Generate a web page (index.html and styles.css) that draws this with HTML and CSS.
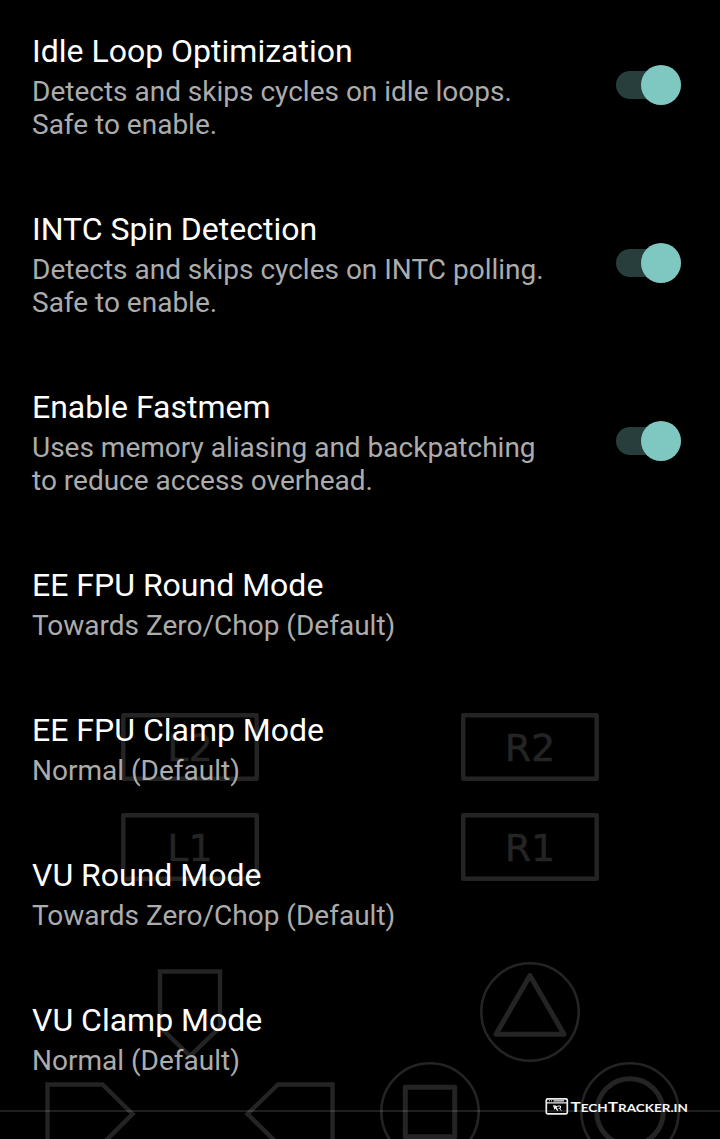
FILE: index.html
```html
<!DOCTYPE html>
<html lang="en">
<head>
<meta charset="utf-8">
<title>Settings</title>
<link rel="stylesheet" href="styles.css">
</head>
<body>
<main class="screen">
  <svg class="gamepad" viewBox="0 0 720 1139" aria-hidden="true">
    <g class="shoulder">
      <rect x="123.3" y="715.2" width="133.4" height="63.6"/>
      <rect x="123.3" y="815.2" width="133.4" height="63.6"/>
      <rect x="463.3" y="715.2" width="133.4" height="63.6"/>
      <rect x="463.3" y="815.2" width="133.4" height="63.6"/>
    </g>
    <g class="arrows">
      <path d="M160 971.5H220V1027L190 1056L160 1027Z"/>
      <path d="M47.5 1084.5H102.500L132.500 1114L102.500 1144H47.500Z"/>
      <path d="M332.500 1084.500H278L247.500 1114L278 1144H332.500Z"/>
    </g>
    <g class="labels">
      <text x="190" y="761">L2</text>
      <text x="190" y="861">L1</text>
      <text x="530" y="761">R2</text>
      <text x="530" y="861">R1</text>
    </g>
    <g class="rings">
      <circle cx="530" cy="1012" r="48.700"/>
      <circle cx="430" cy="1112" r="48.700"/>
      <circle cx="630" cy="1112" r="48.700"/>
    </g>
    <g class="symbols">
      <path d="M530 975.500L564 1034.300H496Z"/>
      <rect x="405.300" y="1087.300" width="49.400" height="49.400"/>
      <circle cx="630" cy="1112" r="33.300"/>
    </g>
  </svg>
  <section class="list">
    <label class="row">
      <span class="copy"><span class="title">Idle Loop Optimization</span><span class="summary">Detects and skips cycles on idle loops.<br>Safe to enable.</span></span>
      <span class="switch"><span class="thumb"></span></span>
    </label>
    <label class="row">
      <span class="copy"><span class="title">INTC Spin Detection</span><span class="summary">Detects and skips cycles on INTC polling.<br>Safe to enable.</span></span>
      <span class="switch"><span class="thumb"></span></span>
    </label>
    <label class="row">
      <span class="copy"><span class="title">Enable Fastmem</span><span class="summary">Uses memory aliasing and backpatching<br>to reduce access overhead.</span></span>
      <span class="switch"><span class="thumb"></span></span>
    </label>
    <div class="row"><span class="copy"><span class="title">EE FPU Round Mode</span><span class="summary">Towards Zero/Chop (Default)</span></span></div>
    <div class="row"><span class="copy"><span class="title">EE FPU Clamp Mode</span><span class="summary">Normal (Default)</span></span></div>
    <div class="row"><span class="copy"><span class="title">VU Round Mode</span><span class="summary">Towards Zero/Chop (Default)</span></span></div>
    <div class="row"><span class="copy"><span class="title">VU Clamp Mode</span><span class="summary">Normal (Default)</span></span></div>
    <div class="divider"></div>
  </section>
  <svg class="watermark" viewBox="0 0 146 22" role="img" aria-label="TechTracker.in">
    <rect class="frame" x="1.300" y="2.900" width="21" height="15" rx="1.300"/>
    <path class="bar" d="M1.500 6.800H22M8.500 4.800H19"/>
    <path class="dots" d="M4 4.800H7.500"/>
    <path class="cursor" d="M8 9L13 10.200L11.700 11.500L13.400 14.200L12.200 15L10.500 12.500L9.300 13.700Z"/>
    <path class="mark" d="M12.500 10H15.500V12.200H13.500M14.400 12.200L16.300 14.700"/>
    <text class="brand" x="25.500" y="16" textLength="117.500" lengthAdjust="spacingAndGlyphs"><tspan class="cap">T</tspan>ECH<tspan class="cap">T</tspan>RACKER.IN</text>
  </svg>
</main>
</body>
</html>
```
FILE: styles.css
```css
body {
  margin: 0;
  background: #000;
  font-family: Roboto, sans-serif;
}
.screen {
  position: relative;
  height: 1139px;
  overflow: hidden;
}
.gamepad {
  position: absolute;
  inset: 0;
  width: 720px;
  height: 1139px;
  fill: none;
  stroke: #242424;
}
.shoulder { stroke-width: 4.4; stroke-linejoin: round; }
.arrows { stroke-width: 4.4; stroke-linejoin: miter; }
.labels {
  fill: #242424;
  stroke: #242424;
  stroke-width: 0.5;
  font: 38px "DejaVu Sans", sans-serif;
  text-anchor: middle;
}
.rings { stroke-width: 2.6; }
.symbols { stroke-width: 5; stroke-linejoin: round; }
.list { position: relative; }
.row {
  display: flex;
  justify-content: space-between;
  padding: 32px 39px 37px 32px;
}
.copy {
  display: flex;
  flex-direction: column;
  gap: 5px;
}
.title {
  color: #fff;
  font-size: 32px;
  line-height: 38px;
}
.summary {
  color: #acacac;
  font-size: 28px;
  line-height: 33px;
}
.switch {
  display: flex;
  justify-content: flex-end;
  align-items: center;
  align-self: flex-start;
  width: 65px;
  height: 28px;
  margin-top: 39px;
  border-radius: 14px;
  background: #283e3c;
}
.thumb {
  flex: none;
  width: 40px;
  height: 40px;
  border-radius: 50%;
  background: #7ec8c1;
}
.divider {
  height: 2px;
  margin-top: -4px;
  background: rgba(255, 255, 255, 0.12);
}
.watermark {
  position: absolute;
  left: 545px;
  top: 1096px;
  width: 146px;
  height: 22px;
  fill: none;
  stroke: #eee;
}
.frame { stroke-width: 1.7; }
.bar { stroke-width: 1.2; }
.dots { stroke-width: 1; stroke-dasharray: 1 1; }
.cursor { fill: #eee; stroke: none; }
.mark { stroke-width: 1; }
.brand {
  fill: #f5f5f5;
  stroke: none;
  font: bold 11px Lato, sans-serif;
}
.cap { font-size: 14px; }
```
